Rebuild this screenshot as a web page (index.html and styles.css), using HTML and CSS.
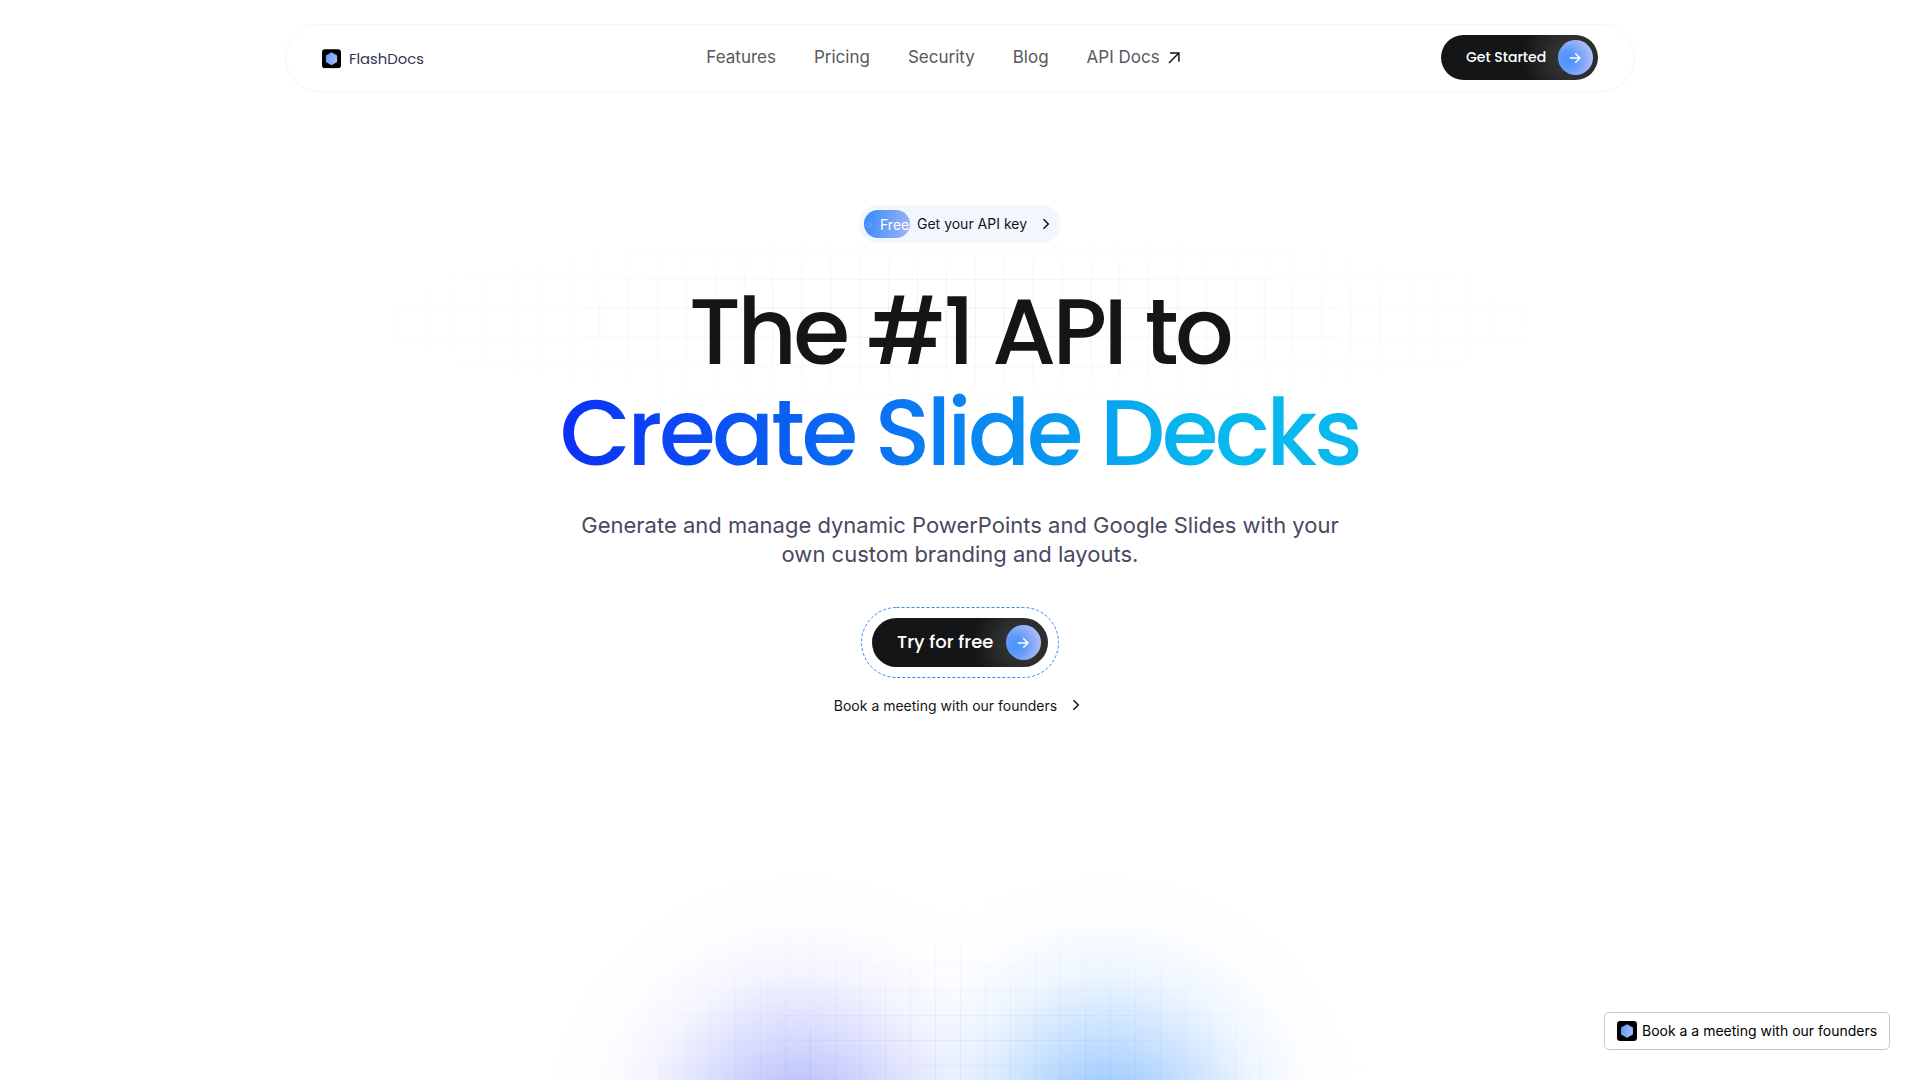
FILE: index.html
```html
<!DOCTYPE html>
<html lang="en">
<head>
<meta charset="utf-8">
<title>FlashDocs</title>
<link rel="stylesheet" href="styles.css">
</head>
<body>
<svg class="defs" width="0" height="0" aria-hidden="true">
  <defs>
    <linearGradient id="hex" x1="0" y1="0" x2="1" y2="0.3">
      <stop offset="0" stop-color="#5b9bff"/><stop offset="1" stop-color="#a3b5f8"/>
    </linearGradient>
    <symbol id="mark" viewBox="0 0 20 20">
      <rect width="20" height="20" rx="3.2" fill="#000"/>
      <path d="M10 3.2 15.9 6.6v6.8L10 16.8 4.1 13.4V6.6z" fill="url(#hex)"/>
    </symbol>
    <symbol id="arrow" viewBox="0 0 12 12">
      <path d="M.8 6h10M6.2 1.2 11 6l-4.8 4.8" fill="none" stroke="#fff" stroke-width="1.5"/>
    </symbol>
    <symbol id="chevron" viewBox="0 0 8 12">
      <path d="M1.5 1.2 6.3 6l-4.8 4.8" fill="none" stroke="#141517" stroke-width="1.5"/>
    </symbol>
  </defs>
</svg>
<div class="page">
  <div class="glow"></div>
  <div class="glow-grid"></div>
  <header class="header">
    <a class="logo"><svg class="logo-mark"><use href="#mark"/></svg><span class="logo-name">FlashDocs</span></a>
    <nav class="nav">
      <a>Features</a><a>Pricing</a><a>Security</a><a>Blog</a>
      <a class="nav-docs">API Docs<svg width="12" height="12" viewBox="0 0 12 12"><path d="M1 11 10.6 1.2M2 1.1h8.9v8.6" fill="none" stroke="#141517" stroke-width="1.5"/></svg></a>
    </nav>
    <a class="btn btn-small"><span>Get Started</span><i class="dot"><svg><use href="#arrow"/></svg></i></a>
  </header>
  <main class="hero">
    <div class="hero-grid"></div>
    <a class="pill"><span class="badge"><svg class="spark" viewBox="0 0 10 10"><path d="M1 6.5 5.5 3.5l3 2-4.5 3zM3 4l2-2M6 8l2.5-1.5" /></svg>Free</span><span class="pill-text">Get your API key</span><svg class="chevron"><use href="#chevron"/></svg></a>
    <h1 class="title"><span class="line">The #1 API to</span><span class="line second">Create Slide Decks</span></h1>
    <p class="subtitle">Generate and manage dynamic PowerPoints and Google Slides with your<br>own custom branding and layouts.</p>
    <div class="cta"><a class="btn btn-large"><span>Try for free</span><i class="dot"><svg><use href="#arrow"/></svg></i></a>
      <svg class="dash" viewBox="0 0 199 71"><rect x=".5" y=".5" width="197" height="70" rx="35"/></svg></div>
    <a class="meeting"><span>Book a meeting with our founders</span><svg class="chevron"><use href="#chevron"/></svg></a>
  </main>
  <a class="widget"><svg><use href="#mark"/></svg><span>Book a a meeting with our founders</span></a>
</div>
</body>
</html>
```
FILE: styles.css
```css
* { box-sizing: border-box; }
body { margin: 0; background: #fff; color: #141517; font-family: Inter, sans-serif; }
.defs { position: absolute; }
.page { position: relative; width: 100%; height: 1080px; overflow: hidden; padding-top: 24px; }

.header {
  position: relative; width: 1350px; height: 68px; margin: 0 auto; padding: 0 36px;
  display: flex; align-items: center; justify-content: space-between;
  border: 1px solid #f5f5f6; border-radius: 34px; background: #fff;
}
.logo { width: 124px; display: flex; align-items: center; gap: 8px; padding-top: 2px; }
.logo-mark { width: 19px; height: 19.5px; }
.logo-name { font: 400 14.8px/20px Poppins, Inter, sans-serif; color: #35334f; }
.nav { display: flex; gap: 38px; font-size: 17px; line-height: 22px; color: #58595b; padding-bottom: 2px; }
.nav-docs { display: flex; align-items: center; gap: 9px; }
.nav-docs svg { margin: 2px 1px 0 -1px; }

.btn {
  display: flex; align-items: center; justify-content: space-between; color: #fff;
  border-radius: 40px; font-family: Poppins, Inter, sans-serif; font-weight: 500; white-space: nowrap;
  background: radial-gradient(circle at calc(100% - 26px) 50%, #3b3b3c 0, #2b2c2d 24px, #141517 50px);
}
.btn-small { width: 157px; height: 45px; margin-bottom: 1px; padding: 0 5px 0 25px; font-size: 14px; }
.btn-large { width: 176px; height: 49px; padding: 0 7px 0 25px; font-size: 18px; }
.btn-large span { padding-bottom: 2px; }
.dot {
  width: 35px; height: 35px; border-radius: 50%; display: flex; align-items: center; justify-content: center;
  background: radial-gradient(circle at 28% 58%, #4a92fc 0, #609bfb 30%, #b6bff6 80%);
}
.dot svg { width: 12px; height: 12px; margin-right: 1px; }

.hero { position: relative; display: flex; flex-direction: column; align-items: center; padding-top: 113px; }
.hero > * { position: relative; }
.hero > .hero-grid {
  position: absolute; left: 50%; top: 138px; width: 1130px; height: 180px; margin-left: -565px;
  background:
    linear-gradient(90deg, rgba(20, 30, 45, .07) 1px, transparent 1px) 2px 0 / 28.9px 28.9px,
    linear-gradient(rgba(20, 30, 45, .07) 1px, transparent 1px) 0 20px / 28.9px 28.9px;
  -webkit-mask-image: radial-gradient(ellipse 630px 92px at center, #000 0, transparent 100%);
  mask-image: radial-gradient(ellipse 630px 92px at center, #000 0, transparent 100%);
}
.chevron { width: 8px; height: 12px; }
.pill {
  width: 202px; height: 38px; padding: 0 11px 0 5px; display: flex; align-items: center;
  border-radius: 19px; background: #f2f7fe; font-size: 14px;
}
.pill-text { padding-bottom: 2px; }
.badge {
  width: 46px; height: 28px; margin-right: 7px; display: flex; align-items: center; gap: 7px; line-height: 27px;
  border-radius: 14px; color: #fff; background: linear-gradient(100deg, #3389fc, #a2b3f6);
}
.spark { width: 9px; height: 10px; fill: none; stroke: #6fa9fb; stroke-width: 1; }
.pill .chevron { margin-left: auto; }

.title {
  margin: 38px 1px 0 0; display: flex; flex-direction: column; align-items: center;
  font: 500 92px/101px Poppins, Inter, sans-serif; letter-spacing: -3.65px;
}
.line { white-space: nowrap; }
.second {
  padding-right: 4px; margin-right: -4px; color: transparent;
  background: linear-gradient(90deg, #0b30f5 0, #0a80f2 48%, #07b9ee 80%, #07b9ee 100%);
  -webkit-background-clip: text; background-clip: text;
}
.subtitle { margin: 28px 0 0; font-size: 22px; line-height: 29px; text-align: center; color: #4a4860; }
.cta { margin-top: 38px; width: 199px; height: 71px; display: flex; align-items: center; justify-content: center; }
.hero .dash { position: absolute; inset: 0; width: 199px; height: 71px; }
.dash rect { fill: none; stroke: #3389fc; stroke-dasharray: 3 2; }
.meeting { margin: 17px 6px 0 0; height: 20px; display: flex; align-items: center; gap: 15px; font-size: 14px; }

.glow {
  position: absolute; inset: 860px 0 0 0;
  background:
    radial-gradient(ellipse 262px 262px at 800px 270px, rgba(145, 155, 252, .76) 0, rgba(155, 165, 252, .64) 18%, rgba(175, 182, 252, .46) 38%, rgba(205, 210, 254, .23) 60%, rgba(230, 234, 255, .08) 80%, transparent 100%),
    radial-gradient(ellipse 262px 262px at 1106px 270px, rgba(120, 180, 255, .86) 0, rgba(130, 187, 255, .72) 18%, rgba(155, 201, 255, .52) 38%, rgba(190, 220, 255, .26) 60%, rgba(225, 240, 255, .1) 80%, transparent 100%);
}
.glow-grid {
  position: absolute; inset: 860px 0 0 0;
  background:
    linear-gradient(90deg, rgba(20, 30, 90, .045) 1px, transparent 1px) 10px 0 / 25px 25px,
    linear-gradient(rgba(20, 30, 90, .045) 1px, transparent 1px) 0 5px / 25px 25px;
  -webkit-mask-image: radial-gradient(ellipse 430px 230px at 960px 255px, #000 40%, transparent 100%);
  mask-image: radial-gradient(ellipse 430px 230px at 960px 255px, #000 40%, transparent 100%);
}

.widget {
  position: absolute; right: 30px; bottom: 30px; width: 286px; height: 38px; padding: 0 12px;
  display: flex; align-items: center; gap: 5px; border: 1px solid #c9c9cb; border-radius: 5px;
  background: #fff; color: #000; font-size: 14px; white-space: nowrap;
}
.widget svg { width: 20px; height: 20px; flex: none; }
.widget span { padding-bottom: 1px; }
```
